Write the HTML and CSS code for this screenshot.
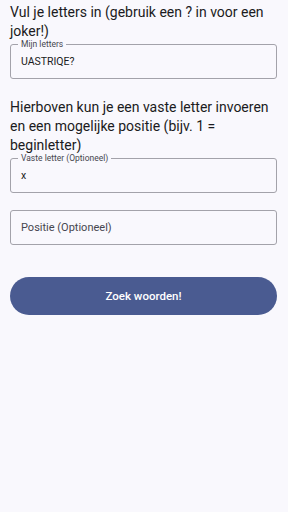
FILE: index.html
```html
<!DOCTYPE html>
<html lang="nl">
<head>
    <meta charset="UTF-8">
    <meta name="viewport" content="width=device-width, initial-scale=1.0">
    <title>Woordzoeker</title>
    <link rel="stylesheet" href="styles.css">
</head>
<body>
    <main class="screen">
        <p class="intro">Vul je letters in (gebruik een ? in voor een joker!)</p>
        <div class="field">
            <span class="field-label">Mijn letters</span>
            <span class="field-value">UASTRIQE?</span>
        </div>

        <p class="intro intro-second">Hierboven kun je een vaste letter invoeren en een mogelijke positie (bijv. 1 = beginletter)</p>
        <div class="field">
            <span class="field-label">Vaste letter (Optioneel)</span>
            <span class="field-value">x</span>
        </div>
        <div class="field field-empty">
            <span class="field-placeholder">Positie (Optioneel)</span>
        </div>

        <button class="btn-search">Zoek woorden!</button>
    </main>
</body>
</html>
```

FILE: styles.css
```css
* {
  padding: 0;
  margin: 0;
  box-sizing: border-box;
}
html {
  font-family: Roboto, 'Noto Sans', sans-serif;
  color: #1b1b21;
  background-color: #f9f8fd;
}
body {
  min-height: 100vh;
  background-color: #f9f8fd;
}
.screen {
  display: flex;
  flex-direction: column;
  padding: 3px 11px 0 10px;
}
.intro {
  font-size: 14px;
  line-height: 19px;
}
.intro-second {
  margin-top: 19px;
}
.field {
  position: relative;
  height: 35px;
  margin-top: 3px;
  border: 1px solid #a3a2aa;
  border-radius: 3px;
  display: flex;
  align-items: center;
  padding-left: 10px;
}
.field-empty {
  margin-top: 17px;
}
.field-label {
  /* sits on the top border, like a material outlined field */
  position: absolute;
  top: -6px;
  left: 7px;
  padding: 0 3px;
  font-size: 8.5px;
  line-height: 10px;
  color: #46464f;
  background-color: #f9f8fd;
}
.field-value {
  font-size: 10.5px;
  color: #1b1b21;
}
.field-placeholder {
  font-size: 11px;
  color: #46464f;
}
.btn-search {
  margin-top: 32px;
  height: 38px;
  border: none;
  border-radius: 19px;
  background-color: #4a5b91;
  color: #fff;
  font-family: inherit;
  font-size: 11.5px;
  font-weight: 500;
}
```
